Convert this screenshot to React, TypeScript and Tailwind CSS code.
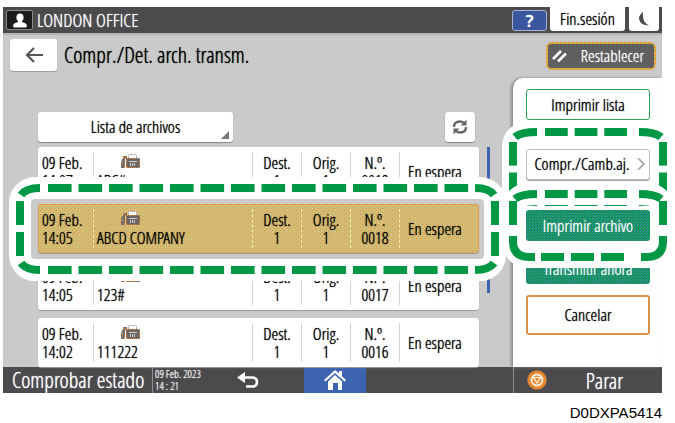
import type { ReactNode } from "react";

type FileRow = {
  date: string;
  time: string;
  name: string;
  dest: number;
  orig: number;
  no: string;
  selected?: boolean;
};

const rows: FileRow[] = [
  { date: "09 Feb.", time: "14:07", name: "ABC#", dest: 1, orig: 1, no: "0019" },
  { date: "09 Feb.", time: "14:05", name: "ABCD COMPANY", dest: 1, orig: 1, no: "0018", selected: true },
  { date: "09 Feb.", time: "14:05", name: "123#", dest: 1, orig: 1, no: "0017" },
  { date: "09 Feb.", time: "14:02", name: "111222", dest: 1, orig: 1, no: "0016" },
];

const SHORT_BEND = "M1 7 Q6 0 20 0";
const WIDE_BEND = "M2 5 Q8 0 24 0";
const LONG_BEND = "M0 21 V16 Q0 0 16 0 H22";

function Bend({ path, place }: { path: string; place: string }) {
  return (
    <svg className={`absolute h-6 w-6 overflow-visible ${place}`} viewBox="0 0 24 24" aria-hidden="true">
      <path d={path} fill="none" stroke="#009844" strokeWidth="8" />
    </svg>
  );
}

/* Dashed green frame with a white halo, drawn round a control or a row. */
function Callout({ box, edgeX, topY, edgeY, top, bottom }: { box: string; edgeX: string; topY?: string; edgeY: string; top: string; bottom: string }) {
  const dashX = "absolute h-2 bg-[linear-gradient(90deg,#009844_78%,transparent_78%)] bg-[length:30px_8px] [background-repeat:round_no-repeat]";
  const dashY = "absolute w-2 bg-[linear-gradient(180deg,#009844_76%,transparent_76%)] bg-[length:8px_31px] [background-repeat:no-repeat_round]";
  return (
    <div className={`pointer-events-none absolute z-20 ${box}`} aria-hidden="true">
      <div className="absolute -inset-[11px] rounded-[26px] border-[22px] border-white" />
      <div className={`${dashX} -top-1 ${topY ?? edgeX}`} />
      <div className={`${dashX} -bottom-1 ${edgeX}`} />
      <div className={`${dashY} -left-1 ${edgeY}`} />
      <div className={`${dashY} -right-1 ${edgeY}`} />
      <Bend path={top} place="left-0 top-0" />
      <Bend path={top} place="right-0 top-0 -scale-x-100" />
      <Bend path={bottom} place="left-0 bottom-0 -scale-y-100" />
      <Bend path={bottom} place="right-0 bottom-0 -scale-100" />
    </div>
  );
}

/* Dotted amber texture behind the selected row. */
function DotFill() {
  return (
    <svg className="absolute inset-0 -z-10 h-full w-full rounded-[3px]" shapeRendering="crispEdges" aria-hidden="true">
      <defs>
        <pattern id="row-dots" width="4" height="4" patternUnits="userSpaceOnUse">
          <rect width="4" height="4" fill="#d0bf78" />
          <rect width="1" height="1" fill="#f08c32" />
          <rect x="2" y="2" width="1" height="1" fill="#f08c32" />
        </pattern>
      </defs>
      <rect width="100%" height="100%" fill="url(#row-dots)" />
    </svg>
  );
}

function FaxIcon() {
  return (
    <svg className="ml-[24px] h-[15px] w-[19px]" viewBox="0 0 19 15" aria-hidden="true">
      <path d="M7.500 5V1.500q0-1 1-1h6q1 0 1 1V5" fill="#fff" stroke="#b4b4ba" />
      <path d="M2 2h4v3H4v9H0V9l1-4h1z" fill="#77706f" />
      <path d="M2.500 2v2M1.500 8v2M3.500 12v2M4.500 3v2" stroke="#e8812f" />
      <rect x="5" y="4" width="14" height="10" rx="1.500" fill="#6b6664" />
      <path d="M6 4.500h12M5.500 6v7M18.500 6v7M6 13.500h12" stroke="#e8812f" strokeDasharray="1 1" />
      <path d="M8 7.500h8M9.500 9v3M11.500 9v3M13.500 9v3" stroke="#cfcfd4" />
    </svg>
  );
}

function Cell({ children, first, last, center, selected }: { children: ReactNode; first?: boolean; last?: boolean; center?: boolean; selected?: boolean }) {
  const rule = first ? "" : selected ? "border-l border-dashed border-[#f7ef9c]" : "border-l border-[#d4d4d4]";
  const fill = selected ? "" : `bg-white ${first ? "rounded-l-[3px]" : ""} ${last ? "rounded-r-[3px]" : ""}`;
  return (
    <td className={`h-[49px] p-0 ${fill}`}>
      <div className={`flex h-[39px] flex-col justify-center ${rule} ${center ? "items-center" : first ? "pl-1" : last ? "pl-2" : "pl-[3px]"}`}>{children}</div>
    </td>
  );
}

function FileTable() {
  return (
    <table className="w-full table-fixed border-separate border-spacing-0 text-[17px] leading-[18px]">
      <colgroup>
        <col className="w-[55px]" />
        <col />
        <col className="w-[49px]" />
        <col className="w-[49px]" />
        <col className="w-[49px]" />
        <col className="w-[80px]" />
      </colgroup>
      {rows.map((r, i) => (
        <tbody key={r.no} className={`relative ${r.selected ? "z-10" : ""}`}>
          {i > 0 && (
            <tr aria-hidden="true">
              <td colSpan={6} className="h-2 p-0" />
            </tr>
          )}
          <tr className={`relative rounded-[3px] shadow-[0_1px_1px_#9a9a9a] ${r.selected ? "outline-1 -outline-offset-1 outline-dotted outline-[#ee8a2e]" : ""}`}>
            <Cell first selected={r.selected}>
              <span>{r.date}</span>
              <span>{r.time}</span>
              {r.selected && (
                <>
                  <DotFill />
                  <Callout
                    box="-left-[18px] -right-[16px] -top-[16px] -bottom-[17px]"
                    edgeX="left-[28px] right-[20px]"
                    edgeY="top-[13px] bottom-[7px]"
                    top={SHORT_BEND}
                    bottom={SHORT_BEND}
                  />
                </>
              )}
            </Cell>
            <Cell selected={r.selected}>
              <span className="h-[18px]">
                <FaxIcon />
              </span>
              <span>{r.name}</span>
            </Cell>
            <Cell center selected={r.selected}>
              <span>Dest.</span>
              <span>{r.dest}</span>
            </Cell>
            <Cell center selected={r.selected}>
              <span>Orig.</span>
              <span>{r.orig}</span>
            </Cell>
            <Cell center selected={r.selected}>
              <span>N.º.</span>
              <span>{r.no}</span>
            </Cell>
            <Cell last selected={r.selected}>
              <span>En espera</span>
            </Cell>
          </tr>
        </tbody>
      ))}
    </table>
  );
}

function Header() {
  return (
    <header className="flex h-[26px] items-start bg-[#4b4b4d] px-[3px] text-white">
      <span className="mt-[3px] flex h-5 w-[27px] items-end justify-center rounded-[2px] border border-[#8b8b8b] bg-[#1c1a1b]">
        <svg className="h-4 w-4" viewBox="0 0 16 16" fill="#fff" aria-hidden="true">
          <ellipse cx="8" cy="4.500" rx="3.600" ry="4" />
          <path d="M6 7h4v2q5 1 5 4 0 1.500-2 1.500H3Q1 14.500 1 13q0-3 5-4z" />
        </svg>
      </span>
      <h1 className="ml-1 flex-1 text-[19px] leading-[26px]">LONDON OFFICE</h1>
      <button className="mt-[3px] h-[21px] w-[35px] rounded-[3px] border border-[#a9b3cf] bg-[#3a569f] font-['Open_Sans'] text-[17px] font-semibold leading-[18px]" aria-label="Ayuda">
        ?
      </button>
      <button className="ml-[3px] h-6 w-[75px] rounded-b-[3px] bg-white text-[17px] leading-[22px] text-black">Fin.sesión</button>
      <button className="ml-1 flex h-6 w-[30px] items-center justify-center rounded-b-[3px] bg-white" aria-label="Reposo">
        <svg className="h-[14px] w-3" viewBox="0 0 12 14" aria-hidden="true">
          <path d="M5 0Q1 3 1 6.500 2 13.500 11 13.500 6.500 11 5.500 7.500 4.500 4 5 0z" fill="#4b4b4d" />
        </svg>
      </button>
    </header>
  );
}

function TitleBar() {
  return (
    <div className="flex h-[45px] items-start justify-between pl-[7px] pr-[6px] shadow-[inset_0_2px_1px_#b4b4b4]">
      <div className="flex">
        <button className="mt-[6px] flex h-8 w-[47px] items-center justify-center rounded-[3px] bg-white shadow-[0_1px_1px_#999]" aria-label="Volver">
          <svg className="h-4 w-[18px]" viewBox="0 0 18 16" fill="none" stroke="#555" strokeWidth="2.200" aria-hidden="true">
            <path d="M18 8H2M9 1 2 8l7 7" />
          </svg>
        </button>
        <h2 className="ml-[7px] pt-[6px] text-[22px] leading-[30px]">Compr./Det. arch. transm.</h2>
      </div>
      <button className="mt-[9px] h-7 w-[110px] rounded-[6px] border-2 border-dotted border-[#f39325] bg-[#c9bd6a] text-[17px] text-white">
        <span className="flex h-full items-center rounded-[3px] bg-[#5f5f5f] pl-1">
          <svg className="h-3 w-[15px]" viewBox="0 0 15 12" stroke="#fff" strokeWidth="2.600" aria-hidden="true">
            <path d="M1 9 9 1M6 11.500l8-8" />
          </svg>
          <span className="flex-1 pl-1 text-center">Restablecer</span>
        </span>
      </button>
    </div>
  );
}

function Toolbar() {
  return (
    <div className="flex items-start justify-between pr-1">
      <label className="relative h-[30px] w-[195px]">
        <select className="h-full w-full appearance-none rounded-[3px] bg-white text-center text-[17px] shadow-[0_1px_1px_#888] [text-align-last:center]" aria-label="Vista">
          <option>Lista de archivos</option>
        </select>
        <span className="pointer-events-none absolute bottom-[3px] right-1 h-2 w-2 bg-[#777] [clip-path:polygon(100%_0,100%_100%,0_100%)]" />
      </label>
      <button className="flex h-[30px] w-[30px] items-center justify-center rounded-[3px] bg-white shadow-[0_1px_1px_#888]" aria-label="Actualizar">
        <svg className="h-4 w-4" viewBox="0 0 16 16" aria-hidden="true">
          <path d="M2 8Q2 2.500 8 2.500q2.500 0 4 1.500M14 8q0 5.500-6 5.500-2.500 0-4-1.500" fill="none" stroke="#666" strokeWidth="2.400" />
          <path d="M14.500.5v6h-6zM1.500 15.500v-6h6z" fill="#666" />
        </svg>
      </button>
    </div>
  );
}

function SidePanel() {
  const solid =
    "h-[31px] w-full rounded-[3px] bg-[#0f9558] bg-[conic-gradient(at_1px_1px,transparent_270deg,#5587bd_0),conic-gradient(at_1px_1px,transparent_270deg,#4a82b0_0)] bg-[length:3px_3px] bg-[position:0_0,1px_2px] text-[17px] leading-[29px] text-white";
  return (
    <aside className="relative w-[149px] shrink-0 rounded-tl-[10px] bg-white pl-[13px] pr-3 pt-[11px] shadow-[-2px_0_3px_#8a8a8a]">
      <button className="h-[31px] w-full rounded-[3px] border border-[#2aa05f] bg-white text-[17px] leading-[27px]">Imprimir lista</button>
      <div className="relative mt-[29px] h-[31px]">
        <Callout
          box="-left-[13px] -right-[13px] -top-[17px] -bottom-[22px]"
          edgeX="left-[32px] right-[29px]"
          edgeY="top-[10px] bottom-[-1px]"
          top={WIDE_BEND}
          bottom={WIDE_BEND}
        />
        <button className="relative z-30 flex h-full w-full items-center rounded-[3px] border border-[#bbb] bg-white pb-px text-[17px] shadow-[0_1px_0_#aaa]">
          <span className="flex-1 text-center">Compr./Camb.aj.</span>
          <svg className="mr-1 h-3 w-2" viewBox="0 0 8 12" fill="none" stroke="#aaa" strokeWidth="1.800" aria-hidden="true">
            <path d="m1 0 6 6-6 6" />
          </svg>
        </button>
      </div>
      <div className="relative z-30 mt-[30px] h-[31px]">
        <Callout
          box="-left-[13px] -right-[13px] -top-[16px] -bottom-[16px]"
          topY="left-[32px] right-[29px]"
          edgeX="left-[28px] right-[32px]"
          edgeY="top-[7px] bottom-[24px]"
          top={WIDE_BEND}
          bottom={LONG_BEND}
        />
        <button className={`relative z-30 ${solid}`}>Imprimir archivo</button>
      </div>
      <button className={`mt-3 ${solid}`}>Transmitir ahora</button>
      <button className="mt-[11px] h-10 w-full rounded-[3px] border-2 border-[#dd9148] bg-white text-[17px] leading-9">Cancelar</button>
    </aside>
  );
}

function Footer() {
  return (
    <footer className="flex h-[26px] bg-[#4b4b4d] text-white">
      <span className="w-[150px] whitespace-nowrap border-r border-[#909090] pl-[9px] text-[22px] leading-6">Comprobar estado</span>
      <time className="w-[51px] whitespace-nowrap pl-[2px] pt-px text-[11px] leading-[12px]">
        09 Feb. 2023
        <br />
        14 : 21
      </time>
      <div className="flex flex-1">
        <button className="flex w-[100px] items-center justify-center pr-3" aria-label="Atrás">
          <svg className="h-[17px] w-[22px]" viewBox="0 0 22 17" aria-hidden="true">
            <path d="M5 5.500h10q5 0 5 4.500t-5 4.500H9" fill="none" stroke="#fff" strokeWidth="2.600" />
            <path d="M0 5.500 8 0v11z" fill="#fff" />
          </svg>
        </button>
        <button className="flex w-[62px] items-center justify-center bg-[#3d64b0]" aria-label="Inicio">
          <svg className="h-5 w-6" viewBox="0 0 24 20" fill="#fff" aria-hidden="true">
            <path d="M12 0 1 10l1.500 1.500L12 3l9.500 8.500L23 10l-4-3.700V1h-3v2.500z" />
            <path d="M5 11.500 12 5l7 6.500V20h-4v-7h-5v7H5z" />
          </svg>
        </button>
      </div>
      <button className="flex w-[149px] items-center border-l border-[#909090] pl-[13px]">
        <svg className="h-5 w-5" viewBox="0 0 20 20" aria-hidden="true">
          <circle cx="10" cy="10" r="9.500" fill="#e8872c" stroke="#b98552" strokeDasharray="1 1" />
          <circle cx="10" cy="10" r="5.500" fill="none" stroke="#f6eee2" strokeWidth="1.800" />
          <path d="M6.500 7.500h7L10 13z" fill="#e8872c" stroke="#fff" strokeWidth="1.200" />
        </svg>
        <span className="flex-1 pb-px pl-7 pr-7 text-center text-[22px] leading-6">Parar</span>
      </button>
    </footer>
  );
}

export default function App() {
  return (
    <div className="bg-white pl-[3px] pr-[13px] pt-[7px] font-['Open_Sans_Condensed_Light','Open_Sans_Condensed','Roboto_Condensed',sans-serif] font-light text-black">
      <div className="[text-shadow:0_0_1px_currentColor] [&_button]:[text-shadow:0_0_1px_currentColor] [&_select]:[text-shadow:0_0_1px_currentColor]">
        <Header />
        <main className="bg-[#cacaca]">
          <TitleBar />
          <div className="flex">
            <section className="min-w-0 flex-1 pl-[35px] pr-[23px] pt-[34px]">
              <div className="flex">
                <div className="min-w-0 flex-1">
                  <Toolbar />
                  <div className="mt-[5px]">
                    <FileTable />
                  </div>
                </div>
                <div className="ml-2 mt-[35px] h-[146px] w-[3px] bg-[#3d64b0]" />
              </div>
            </section>
            <SidePanel />
          </div>
        </main>
        <Footer />
      </div>
      <p className="pt-[11px] text-right font-['Liberation_Sans',sans-serif] text-[15px] font-normal leading-[18px]">D0DXPA5414</p>
    </div>
  );
}
